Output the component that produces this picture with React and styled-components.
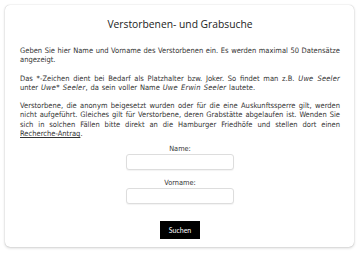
import React, { useState } from "react";
import styled, { createGlobalStyle } from "styled-components";

const GlobalStyle = createGlobalStyle`
  html, body {
    margin: 0;
    padding: 0;
    background: #fff;
  }
`;

const Page = styled.div`
  padding: 5px 6px 8px 5px;
`;

const Card = styled.div`
  background: #fff;
  border-radius: 5px;
  box-shadow: 0 0 1px rgba(0, 0, 0, 0.25), 0 1px 3px rgba(0, 0, 0, 0.18);
  padding: 11px 14px 8px 15px;
  height: 242px;
  box-sizing: border-box;
`;

const Title = styled.h1`
  margin: 0 0 13px;
  text-align: center;
  font-family: "Open Sans", sans-serif;
  font-weight: 400;
  font-size: 10.3px;
  line-height: 17px;
  color: #222;
`;

const Text = styled.p`
  margin: 0 0 9px;
  font-family: "DejaVu Sans Condensed", "DejaVu Sans", sans-serif;
  font-size: 7.5px;
  line-height: 9.3px;
  word-spacing: ${(p) => p.$wordSpacing || 0}px;
  text-align: justify;
  color: #333;

  &:last-of-type {
    margin-bottom: 6px;
  }
`;

const Em = styled.i`
  letter-spacing: 0.2px;
`;

const Link = styled.a`
  color: #333;
  text-decoration: underline;
`;

const Form = styled.form`
  display: flex;
  flex-direction: column;
  align-items: center;
  margin-top: 2px;
`;

const Label = styled.label`
  font-family: "DejaVu Sans Condensed", "DejaVu Sans", sans-serif;
  font-size: 7.3px;
  line-height: 9px;
  color: #333;
  margin-bottom: 1px;
`;

const Input = styled.input`
  width: 108px;
  height: 16px;
  box-sizing: border-box;
  border: 1px solid #ddd;
  border-radius: 3px;
  box-shadow: 0 1px 1px rgba(0, 0, 0, 0.05);
  margin: 0 0 ${(p) => p.$gap}px;
  padding: 0 4px;
  font-size: 7px;
`;

const Button = styled.button`
  background: #000;
  color: #fff;
  border: none;
  width: 40px;
  height: 18px;
  padding: 0;
  font-family: Lato, sans-serif;
  font-size: 7px;
  cursor: pointer;
`;

const App = () => {
  const [name, setName] = useState("");
  const [vorname, setVorname] = useState("");

  return (
    <Page>
      <GlobalStyle />
      <Card>
        <Title>Verstorbenen- und Grabsuche</Title>
        <Text>
          Geben Sie hier Name und Vorname des Verstorbenen ein. Es werden
          maximal 50 Datensätze angezeigt.
        </Text>
        <Text $wordSpacing={0.7}>
          Das *-Zeichen dient bei Bedarf als Platzhalter bzw. Joker. So findet
          man z.B. <Em>Uwe Seeler</Em> unter <Em>Uwe* Seeler</Em>, da sein
          voller Name <Em>Uwe Erwin Seeler</Em> lautete.
        </Text>
        <Text>
          Verstorbene, die anonym beigesetzt wurden oder für die eine
          Auskunftssperre gilt, werden nicht aufgeführt. Gleiches gilt für
          Verstorbene, deren Grabstätte abgelaufen ist. Wenden Sie sich in
          solchen Fällen bitte direkt an die Hamburger Friedhöfe und stellen
          dort einen <Link href="#">Recherche-Antrag</Link>.
        </Text>
        <Form onSubmit={(e) => e.preventDefault()}>
          <Label htmlFor="name">Name:</Label>
          <Input
            id="name"
            $gap={8}
            value={name}
            onChange={(e) => setName(e.target.value)}
          />
          <Label htmlFor="vorname">Vorname:</Label>
          <Input
            id="vorname"
            $gap={17}
            value={vorname}
            onChange={(e) => setVorname(e.target.value)}
          />
          <Button type="submit">Suchen</Button>
        </Form>
      </Card>
    </Page>
  );
};

export default App;
